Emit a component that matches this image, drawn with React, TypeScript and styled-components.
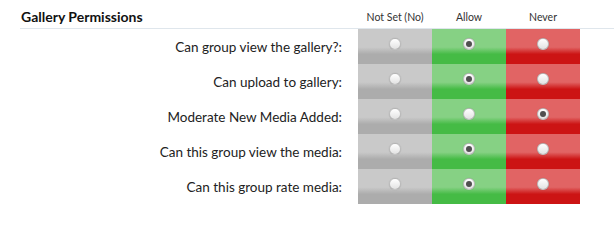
import styled, { createGlobalStyle } from "styled-components";

const GlobalStyle = createGlobalStyle`
  body {
    margin: 0;
    background: #ffffff;
    font-family: Lato, "Liberation Sans", sans-serif;
    color: #222;
  }
`;

const Wrapper = styled.div`
  padding-left: 20px;
`;

const columns = "338px 74px 74px 74px 1fr";

const HeadRow = styled.div`
  display: grid;
  grid-template-columns: ${columns};
  height: 29px;
  box-sizing: border-box;
  padding-bottom: 2px;
  border-bottom: 1px solid #dfe6ec;
  align-items: end;
`;

const Title = styled.h3`
  margin: 0;
  padding-left: 1px;
  font-size: 14px;
  line-height: 18px;
  font-weight: bold;
  color: #111;
`;

const ColHead = styled.div`
  font-size: 10.5px;
  line-height: 14px;
  padding-bottom: 2px;
  color: #333;
  text-align: center;
`;

const Row = styled.div`
  display: grid;
  grid-template-columns: ${columns};
  height: 35px;
`;

const Label = styled.div`
  display: flex;
  align-items: center;
  justify-content: flex-end;
  padding-right: 16px;
  font-size: 13.5px;
  color: #222;
`;

type Tone = "unset" | "allow" | "never";

const tones: Record<Tone, [string, string]> = {
  unset: ["#c9c9c9", "#acacac"],
  allow: ["#86d184", "#45bb45"],
  never: ["#e16464", "#cc1414"],
};

const Cell = styled.div<{ $tone: Tone }>`
  display: flex;
  justify-content: center;
  padding-top: 9px;
  box-sizing: border-box;
  background: linear-gradient(
    to bottom,
    ${(p) => tones[p.$tone][0]} 0%,
    ${(p) => tones[p.$tone][0]} 52%,
    ${(p) => tones[p.$tone][1]} 72%,
    ${(p) => tones[p.$tone][1]} 100%
  );
`;

const Radio = styled.span<{ $checked: boolean }>`
  width: 12px;
  height: 12px;
  border-radius: 50%;
  box-sizing: border-box;
  background: linear-gradient(to bottom, #ffffff, #e2e2e2);
  border: 1px solid rgba(110, 110, 110, 0.4);
  box-shadow: 0 0 1px rgba(0, 0, 0, 0.2);
  display: flex;
  align-items: center;
  justify-content: center;

  &::after {
    content: "";
    display: ${(p) => (p.$checked ? "block" : "none")};
    width: 6px;
    height: 6px;
    border-radius: 50%;
    background: #505050;
  }
`;

const permissions: { label: string; value: Tone }[] = [
  { label: "Can group view the gallery?:", value: "allow" },
  { label: "Can upload to gallery:", value: "allow" },
  { label: "Moderate New Media Added:", value: "never" },
  { label: "Can this group view the media:", value: "allow" },
  { label: "Can this group rate media:", value: "allow" },
];

const toneOrder: Tone[] = ["unset", "allow", "never"];

export default function App() {
  return (
    <>
      <GlobalStyle />
      <Wrapper>
        <HeadRow>
          <Title>Gallery Permissions</Title>
          <ColHead>Not Set (No)</ColHead>
          <ColHead>Allow</ColHead>
          <ColHead>Never</ColHead>
        </HeadRow>
        {permissions.map((perm) => (
          <Row key={perm.label}>
            <Label>{perm.label}</Label>
            {toneOrder.map((tone) => (
              <Cell key={tone} $tone={tone}>
                <Radio $checked={perm.value === tone} />
              </Cell>
            ))}
          </Row>
        ))}
      </Wrapper>
    </>
  );
}
